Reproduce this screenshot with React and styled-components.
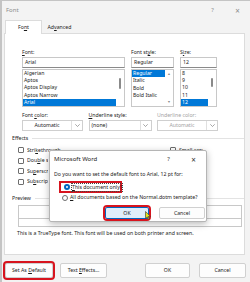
import React from "react";
import styled, { createGlobalStyle } from "styled-components";

const Global = createGlobalStyle`
  html, body { margin: 0; padding: 0; }
  body {
    width: 250px;
    height: 282px;
    overflow: hidden;
    background: #c4c4c4;
    font-family: "Noto Sans", "Liberation Sans", sans-serif;
  }
`;

const Window = styled.div`
  position: relative;
  margin: 1px 0 0 2px;
  width: 248px;
  height: 281px;
  background: #f3f3f3;
  display: flex;
  flex-direction: column;
  font-size: 5.2px;
  line-height: 7px;
  color: #1b1b1b;
`;

const TitleBar = styled.div`
  height: 19px;
  flex: 0 0 19px;
  display: flex;
  align-items: center;
  padding-left: 4px;
  color: #8c8c8c;
  font-size: 6px;
`;

const TitleText = styled.span`
  flex: 1;
`;

const TitleButton = styled.span`
  width: 25px;
  text-align: center;
  font-size: ${(p) => (p.$big ? "8px" : "6px")};
  color: ${(p) => p.$color || "#8c8c8c"};
`;

const TabRow = styled.div`
  display: flex;
  height: 13px;
  flex: 0 0 13px;
  padding-left: 3px;
`;

const Tab = styled.div`
  width: ${(p) => p.$w}px;
  display: flex;
  align-items: center;
  justify-content: center;
  background: ${(p) => (p.$active ? "#ffffff" : "transparent")};
  border: 1px solid ${(p) => (p.$active ? "#dcdcdc" : "transparent")};
  border-bottom: none;
  margin-bottom: -1px;
  position: relative;
  z-index: 1;
`;

const Panel = styled.div`
  flex: 0 0 222px;
  height: 222px;
  box-sizing: border-box;
  margin: 0 5px 0 2px;
  background: #ffffff;
  border: 1px solid #dcdcdc;
  padding: 15px 0 0 7px;
  display: flex;
  flex-direction: column;
`;

const FontGrid = styled.div`
  margin-left: 10px;
  display: grid;
  grid-template-columns: 103px 43px 37px;
  column-gap: 6px;
`;

const Column = styled.div`
  display: flex;
  flex-direction: column;
`;

const Label = styled.div`
  height: 7px;
  line-height: 7px;
  white-space: nowrap;
  color: ${(p) => (p.$disabled ? "#a3a3a3" : "#1b1b1b")};
`;

const Acc = styled.span`
  text-decoration: underline;
  text-underline-offset: 1px;
  text-decoration-thickness: 0.5px;
`;

const TextInput = styled.div`
  margin-top: 1px;
  height: 11px;
  box-sizing: border-box;
  border: 1px solid #c8c8c8;
  border-bottom-color: #8a8a8a;
  padding-left: 2px;
  display: flex;
  align-items: center;
  background: #fff;
`;

const ListBox = styled.div`
  margin-top: 1px;
  height: 38px;
  box-sizing: border-box;
  border: 1px solid #c8c8c8;
  display: flex;
  background: #fff;
`;

const ListItems = styled.div`
  flex: 1;
  display: flex;
  flex-direction: column;
`;

const ListItem = styled.div`
  height: 7.3px;
  line-height: 7.3px;
  padding-left: 1px;
  white-space: nowrap;
  overflow: hidden;
  background: ${(p) => (p.$sel ? "#0078d7" : "transparent")};
  color: ${(p) => (p.$sel ? "#ffffff" : "#1b1b1b")};
`;

const ScrollTrack = styled.div`
  width: 8px;
  flex: 0 0 8px;
  display: flex;
  flex-direction: column;
  align-items: center;
  justify-content: ${(p) => (p.$arrows ? "space-between" : "flex-start")};
  padding: ${(p) => (p.$arrows ? "2px 0 2px" : "0")};
  box-sizing: border-box;
`;

const Thumb = styled.div`
  width: 2px;
  height: ${(p) => p.$h}px;
  margin-top: ${(p) => p.$top}px;
  background: #8a8a8a;
  border-radius: 1px;
`;

const Arrow = styled.div`
  font-size: 3.5px;
  line-height: 4px;
  color: #8a8a8a;
`;

const DropGrid = styled.div`
  margin-left: 10px;
  margin-top: 5px;
  display: grid;
  grid-template-columns: 61px 63px 61px;
  column-gap: 5.5px;
`;

const Dropdown = styled.div`
  margin-top: 1px;
  height: 11px;
  box-sizing: border-box;
  border: 1px solid #cfcfcf;
  display: flex;
  background: #fff;
  color: ${(p) => (p.$disabled ? "#a3a3a3" : "#1b1b1b")};
`;

const DropText = styled.div`
  flex: 1;
  display: flex;
  align-items: center;
  justify-content: ${(p) => (p.$left ? "flex-start" : "center")};
  padding-left: ${(p) => (p.$left ? "2px" : "0")};
`;

const DropButton = styled.div`
  width: 10px;
  border-left: 1px solid #e0e0e0;
  display: flex;
  align-items: center;
  justify-content: center;
`;

const SectionHeader = styled.div`
  margin-top: ${(p) => p.$mt}px;
  height: 7px;
  display: flex;
  align-items: center;
  gap: 4px;
`;

const SectionLine = styled.div`
  flex: 1;
  height: 1px;
  background: #e3e3e3;
`;

const EffectsGrid = styled.div`
  margin-top: 3px;
  margin-left: 6px;
  display: grid;
  grid-template-columns: 152px 1fr;
  grid-auto-rows: 10.5px;
`;

const CheckRow = styled.div`
  display: flex;
  align-items: center;
  gap: 3px;
  white-space: nowrap;
`;

const CheckBox = styled.div`
  width: 6px;
  height: 6px;
  flex: 0 0 6px;
  box-sizing: border-box;
  border: 1px solid #6e6e6e;
  border-radius: 1px;
  background: #fff;
`;

const CheckLabel = styled.span`
  display: block;
  overflow: hidden;
  max-width: ${(p) => (p.$clip ? `${p.$clip}px` : "none")};
`;

const PreviewBox = styled.div`
  margin: 3.5px 0 0 6px;
  width: 224px;
  height: 22px;
  box-sizing: border-box;
  border: 1px solid #c8c8c8;
  display: flex;
  flex-direction: column;
`;

const PreviewTop = styled.div`
  height: 12px;
  border-bottom: 1px solid #c8c8c8;
`;

const PreviewNote = styled.div`
  margin: 2.5px 0 0 5px;
  white-space: nowrap;
`;

const ButtonRow = styled.div`
  margin-top: 8px;
  height: 15px;
  display: flex;
  padding: 0 4px 0 3px;
  gap: 7px;
`;

const Spacer = styled.div`
  flex: 1;
`;

const Button = styled.div`
  position: relative;
  width: ${(p) => p.$w}px;
  height: ${(p) => p.$h || 15}px;
  box-sizing: border-box;
  border: 1px solid ${(p) => (p.$focus ? "#0067c0" : "#d0d0d0")};
  background: ${(p) => (p.$focus ? "#e0eefa" : "#fdfdfd")};
  border-radius: 2px;
  display: flex;
  align-items: center;
  justify-content: center;
  white-space: nowrap;
  margin-left: ${(p) => p.$ml || 0}px;
  outline: ${(p) => (p.$red ? "2px solid #d7141e" : "none")};
  outline-offset: ${(p) => (p.$red ? "0.5px" : "0")};
`;

const Popup = styled.div`
  position: absolute;
  left: 47px;
  top: 149px;
  width: 158px;
  height: 72px;
  box-sizing: border-box;
  background: #ffffff;
  border: 1px solid #b5b5b5;
  border-radius: 2px;
  box-shadow: 0 2px 7px rgba(0, 0, 0, 0.28);
  display: flex;
  flex-direction: column;
  z-index: 5;
`;

const PopupTitle = styled.div`
  height: 16px;
  display: flex;
  align-items: center;
  padding-left: 4px;
  font-size: 6px;
  color: #1b1b1b;
`;

const PopupText = styled.div`
  margin: 4px 0 0 4px;
  height: 7px;
  white-space: nowrap;
`;

const RadioRow = styled.div`
  margin-left: ${(p) => (p.$red ? 9 : 12)}px;
  margin-top: ${(p) => p.$mt}px;
  display: flex;
  align-items: center;
  gap: 2px;
  height: ${(p) => (p.$red ? 12 : 9)}px;
  width: ${(p) => (p.$red ? "63px" : "auto")};
  padding-left: ${(p) => (p.$red ? 3 : 0)}px;
  box-sizing: border-box;
  border: ${(p) => (p.$red ? "2px solid #d7141e" : "none")};
  white-space: nowrap;
`;

const Radio = styled.div`
  width: 6px;
  height: 6px;
  flex: 0 0 6px;
  box-sizing: border-box;
  border-radius: 50%;
  border: ${(p) => (p.$on ? "2px solid #0067c0" : "1px solid #6e6e6e")};
  background: #fff;
`;

const FocusText = styled.span`
  outline: 0.5px dotted #444;
`;

const PopupButtons = styled.div`
  margin-top: 5px;
  display: flex;
  padding-left: 55px;
  gap: 10px;
`;

const Cursor = styled.svg`
  position: absolute;
  left: 39px;
  top: 3px;
`;

const Check = ({ children, clip }) => (
  <CheckRow>
    <CheckBox />
    <CheckLabel $clip={clip}>{children}</CheckLabel>
  </CheckRow>
);

const Chevron = () => (
  <svg width="5" height="3" viewBox="0 0 5 3">
    <path d="M0.3 0.3 L2.5 2.5 L4.7 0.3" fill="none" stroke="#6b6b6b" strokeWidth="0.6" />
  </svg>
);

export default function App() {
  return (
    <>
      <Global />
      <Window>
        <TitleBar>
          <TitleText>Font</TitleText>
          <TitleButton>?</TitleButton>
          <TitleButton $big>×</TitleButton>
        </TitleBar>
        <TabRow>
          <Tab $active $w={35}>
            <span>
              Fo<Acc>n</Acc>t
            </span>
          </Tab>
          <Tab $w={33}>
            <span>
              Ad<Acc>v</Acc>anced
            </span>
          </Tab>
        </TabRow>
        <Panel>
          <FontGrid>
            <Column>
              <Label>
                <Acc>F</Acc>ont:
              </Label>
              <TextInput>Arial</TextInput>
              <ListBox>
                <ListItems>
                  <ListItem>Algerian</ListItem>
                  <ListItem>Aptos</ListItem>
                  <ListItem>Aptos Display</ListItem>
                  <ListItem>Aptos Narrow</ListItem>
                  <ListItem $sel>Arial</ListItem>
                </ListItems>
                <ScrollTrack>
                  <Thumb $h={11} $top={8} />
                </ScrollTrack>
              </ListBox>
            </Column>
            <Column>
              <Label>
                Font st<Acc>y</Acc>le:
              </Label>
              <TextInput>Regular</TextInput>
              <ListBox>
                <ListItems>
                  <ListItem $sel>Regular</ListItem>
                  <ListItem>Italic</ListItem>
                  <ListItem>Bold</ListItem>
                  <ListItem>Bold Italic</ListItem>
                </ListItems>
                <ScrollTrack $arrows>
                  <Arrow>▲</Arrow>
                  <Arrow>▼</Arrow>
                </ScrollTrack>
              </ListBox>
            </Column>
            <Column>
              <Label>
                S<Acc>i</Acc>ze:
              </Label>
              <TextInput>12</TextInput>
              <ListBox>
                <ListItems>
                  <ListItem>8</ListItem>
                  <ListItem>9</ListItem>
                  <ListItem>10</ListItem>
                  <ListItem>11</ListItem>
                  <ListItem $sel>12</ListItem>
                </ListItems>
                <ScrollTrack>
                  <Thumb $h={9} $top={8} />
                </ScrollTrack>
              </ListBox>
            </Column>
          </FontGrid>
          <DropGrid>
            <Column>
              <Label>
                Font <Acc>c</Acc>olor:
              </Label>
              <Dropdown>
                <DropText>Automatic</DropText>
                <DropButton>
                  <Chevron />
                </DropButton>
              </Dropdown>
            </Column>
            <Column>
              <Label>
                <Acc>U</Acc>nderline style:
              </Label>
              <Dropdown>
                <DropText $left>(none)</DropText>
                <DropButton>
                  <Chevron />
                </DropButton>
              </Dropdown>
            </Column>
            <Column>
              <Label $disabled>Underline color:</Label>
              <Dropdown $disabled>
                <DropText>Automatic</DropText>
                <DropButton>
                  <Chevron />
                </DropButton>
              </Dropdown>
            </Column>
          </DropGrid>
          <SectionHeader $mt={4}>
            <span>Effects</span>
            <SectionLine />
          </SectionHeader>
          <EffectsGrid>
            <Check>
              Stri<Acc>k</Acc>ethrough
            </Check>
            <Check clip={24}>
              S<Acc>m</Acc>all caps
            </Check>
            <Check clip={21}>
              Dou<Acc>b</Acc>le strikethrough
            </Check>
            <span />
            <Check clip={21}>
              Su<Acc>p</Acc>erscript
            </Check>
            <span />
            <Check clip={21}>
              Su<Acc>b</Acc>script
            </Check>
          </EffectsGrid>
          <SectionHeader $mt={7.5}>
            <span>Preview</span>
            <SectionLine />
          </SectionHeader>
          <PreviewBox>
            <PreviewTop />
          </PreviewBox>
          <PreviewNote>
            This is a TrueType font. This font will be used on both printer and screen.
          </PreviewNote>
        </Panel>
        <ButtonRow>
          <Button $w={48} $red>
            <span>
              Set As <Acc>D</Acc>efault
            </span>
          </Button>
          <Button $w={47}>
            <span>
              Text <Acc>E</Acc>ffects...
            </span>
          </Button>
          <Spacer />
          <Button $w={45}>
            <span>OK</span>
          </Button>
          <Button $w={47} $ml={2}>
            <span>Cancel</span>
          </Button>
        </ButtonRow>

        <Popup>
          <PopupTitle>
            <TitleText>Microsoft Word</TitleText>
            <TitleButton $color="#333">?</TitleButton>
            <TitleButton $big $color="#333">
              ×
            </TitleButton>
          </PopupTitle>
          <PopupText>Do you want to set the default font to Arial, 12 pt for:</PopupText>
          <RadioRow $red $mt={3}>
            <Radio $on />
            <FocusText>
              <Acc>T</Acc>his document only?
            </FocusText>
          </RadioRow>
          <RadioRow $mt={0}>
            <Radio />
            <span>
              <Acc>A</Acc>ll documents based on the Normal.dotm template?
            </span>
          </RadioRow>
          <PopupButtons>
            <Button $w={44} $h={12} $focus $red>
              <span>OK</span>
              <Cursor width="6" height="9" viewBox="0 0 6 9">
                <path
                  d="M0.5 0.5 L0.5 7.5 L2.2 5.9 L3.4 8.5 L4.4 8 L3.3 5.5 L5.5 5.4 Z"
                  fill="#e4e41a"
                  stroke="#333"
                  strokeWidth="0.6"
                  strokeLinejoin="round"
                />
              </Cursor>
            </Button>
            <Button $w={46} $h={12}>
              <span>Cancel</span>
            </Button>
          </PopupButtons>
        </Popup>
      </Window>
    </>
  );
}
